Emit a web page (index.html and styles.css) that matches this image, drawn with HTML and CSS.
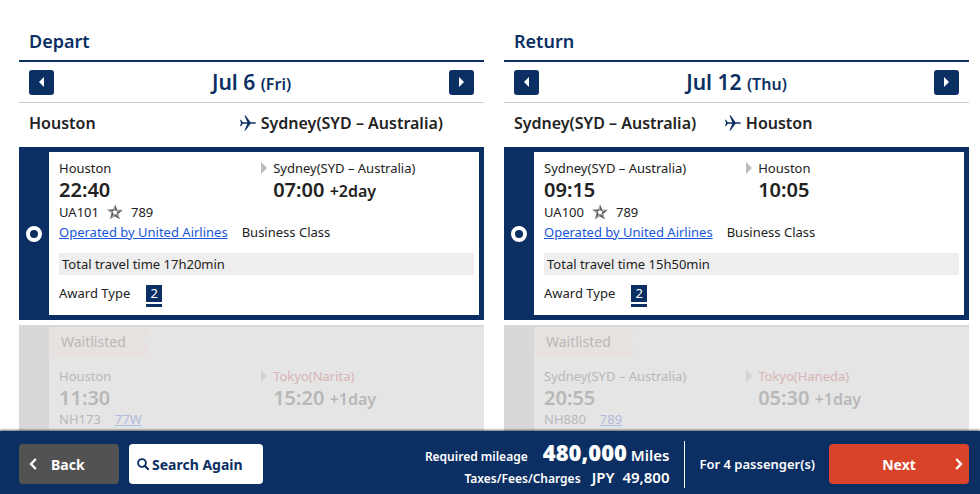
FILE: index.html
```html
<!DOCTYPE html>
<html lang="en">
<head>
    <meta charset="UTF-8">
    <meta name="viewport" content="width=device-width, initial-scale=1.0">
    <title>Select Flights</title>
    <link rel="stylesheet" href="styles.css">
</head>
<body>

<!-- Shared icons -->
<svg class="icon-defs" aria-hidden="true">
    <symbol id="icon-plane" viewBox="0 0 16 16">
        <path d="M0 4.8h.9L2.8 7.3h4.6L4.4.4h1.2l4.9 6.9h3.7c1.1 0 1.8.3 1.8.7s-.7.7-1.8.7h-3.7l-4.9 6.9H4.4l3-6.9H2.8L.9 11.2H0L1 8z"/>
    </symbol>
    <symbol id="icon-alliance" viewBox="0 0 16 16">
        <path fill="#a8a8a8" fill-rule="evenodd" d="M8 .5l2.1 4.9 5.7.4-4.3 3.7 1.4 5.7L8 12.4l-4.9 2.8 1.4-5.7L.2 5.8l5.7-.4zM8 6L5.7 7.6l.9 2.8h2.8l.9-2.8z"/>
        <path fill="#606060" d="M8 .5l2.1 4.9-.3 1.8L8 6zM15.8 5.8l-4.3 3.7-1.9.6.7-2.5zM12.9 15.2L8 12.4l-1-2h2.4zM3.1 15.2l1.4-5.7 1.2-1.9.9 2.8zM.2 5.8l5.7-.4L8 6 5.7 7.6z"/>
    </symbol>
    <symbol id="icon-search" viewBox="0 0 12 12">
        <circle cx="5" cy="5" r="3.9" fill="none" stroke="currentColor" stroke-width="1.9"/>
        <path d="M7.8 7.8l3.2 3.2" fill="none" stroke="currentColor" stroke-width="2.2" stroke-linecap="round"/>
    </symbol>
    <symbol id="icon-left" viewBox="0 0 8 12">
        <path d="M6.8 1L2 6l4.8 5" fill="none" stroke="currentColor" stroke-width="2.4"/>
    </symbol>
    <symbol id="icon-right" viewBox="0 0 8 12">
        <path d="M1.2 1L6 6l-4.8 5" fill="none" stroke="currentColor" stroke-width="2.4"/>
    </symbol>
</svg>

<main class="flights">
    <section class="bound">
        <h2>Depart</h2>
        <div class="date-nav">
            <button type="button" class="day-btn" aria-label="Previous day"><span class="tri tri-left"></span></button>
            <p class="date">Jul 6 <small>(Fri)</small></p>
            <button type="button" class="day-btn" aria-label="Next day"><span class="tri tri-right"></span></button>
        </div>
        <div class="route">
            <span>Houston</span>
            <span class="route-to"><svg class="plane"><use href="#icon-plane"/></svg>Sydney(SYD – Australia)</span>
        </div>

        <div class="flight selected">
            <div class="pick"><input type="radio" name="depart" id="ua101" aria-label="UA101" checked></div>
            <div class="details">
                <div class="legs">
                    <div class="leg">
                        <label for="ua101" class="city">Houston</label>
                        <p class="time">22:40</p>
                    </div>
                    <div class="leg arrival">
                        <p class="city">Sydney(SYD – Australia)</p>
                        <p class="time">07:00 <small>+2day</small></p>
                    </div>
                </div>
                <p class="info"><span>UA101</span><svg class="alliance"><use href="#icon-alliance"/></svg><span>789</span></p>
                <p class="info operator"><a href="#">Operated by United Airlines</a><span>Business Class</span></p>
                <p class="total">Total travel time 17h20min</p>
                <p class="award">Award Type <span class="award-num">2</span></p>
            </div>
        </div>

        <div class="flight disabled">
            <div class="pick"></div>
            <div class="details">
                <p class="tag">Waitlisted</p>
                <div class="legs">
                    <div class="leg">
                        <p class="city">Houston</p>
                        <p class="time">11:30</p>
                    </div>
                    <div class="leg arrival">
                        <p class="city other">Tokyo(Narita)</p>
                        <p class="time">15:20 <small>+1day</small></p>
                    </div>
                </div>
                <p class="info operator"><span>NH173</span><a href="#">77W</a></p>
            </div>
        </div>
    </section>

    <section class="bound">
        <h2>Return</h2>
        <div class="date-nav">
            <button type="button" class="day-btn" aria-label="Previous day"><span class="tri tri-left"></span></button>
            <p class="date">Jul 12 <small>(Thu)</small></p>
            <button type="button" class="day-btn" aria-label="Next day"><span class="tri tri-right"></span></button>
        </div>
        <div class="route">
            <span>Sydney(SYD – Australia)</span>
            <span class="route-to"><svg class="plane"><use href="#icon-plane"/></svg>Houston</span>
        </div>

        <div class="flight selected">
            <div class="pick"><input type="radio" name="return" id="ua100" aria-label="UA100" checked></div>
            <div class="details">
                <div class="legs">
                    <div class="leg">
                        <label for="ua100" class="city">Sydney(SYD – Australia)</label>
                        <p class="time">09:15</p>
                    </div>
                    <div class="leg arrival">
                        <p class="city">Houston</p>
                        <p class="time">10:05</p>
                    </div>
                </div>
                <p class="info"><span>UA100</span><svg class="alliance"><use href="#icon-alliance"/></svg><span>789</span></p>
                <p class="info operator"><a href="#">Operated by United Airlines</a><span>Business Class</span></p>
                <p class="total">Total travel time 15h50min</p>
                <p class="award">Award Type <span class="award-num">2</span></p>
            </div>
        </div>

        <div class="flight disabled">
            <div class="pick"></div>
            <div class="details">
                <p class="tag">Waitlisted</p>
                <div class="legs">
                    <div class="leg">
                        <p class="city">Sydney(SYD – Australia)</p>
                        <p class="time">20:55</p>
                    </div>
                    <div class="leg arrival">
                        <p class="city other">Tokyo(Haneda)</p>
                        <p class="time">05:30 <small>+1day</small></p>
                    </div>
                </div>
                <p class="info operator"><span>NH880</span><a href="#">789</a></p>
            </div>
        </div>
    </section>
</main>

<footer class="bar">
    <button type="button" class="btn back"><svg class="chevron"><use href="#icon-left"/></svg>Back</button>
    <button type="button" class="btn search"><svg class="glass"><use href="#icon-search"/></svg>Search Again</button>
    <div class="cost">
        <p class="miles">Required mileage <span><strong>480,000</strong> Miles</span></p>
        <p class="taxes">Taxes/Fees/Charges <span>JPY&nbsp; 49,800</span></p>
    </div>
    <p class="passengers">For 4 passenger(s)</p>
    <button type="button" class="btn next"><span>Next</span><svg class="chevron"><use href="#icon-right"/></svg></button>
</footer>

</body>
</html>
```
FILE: styles.css
```css
* {
    box-sizing: border-box;
    margin: 0;
    padding: 0;
}
body {
    display: flex;
    flex-direction: column;
    height: 100vh;
    font-family: "Noto Sans", "Open Sans", sans-serif;
    font-size: 13px;
    line-height: 20px;
    color: #222;
    background-color: #fff;
}
button {
    font-family: inherit;
    border: none;
    cursor: pointer;
}
small {
    font-size: 16px;
    line-height: 1;
}
.icon-defs {
    position: absolute;
    width: 0;
    height: 0;
}

/* Flight lists */
.flights {
    flex: 1;
    min-height: 0;
    display: grid;
    grid-template-columns: 1fr 1fr;
    gap: 20px;
    padding: 22px 11px 0 19px;
    overflow-y: auto;
    scrollbar-width: none;
}
h2 {
    padding: 0 10px;
    height: 40px;
    font-size: 18px;
    font-weight: 600;
    line-height: 38px;
    color: #0b2f63;
    border-bottom: 2px solid #0b2f63;
}
.date-nav {
    display: flex;
    justify-content: space-between;
    align-items: center;
    height: 41px;
    padding: 0 10px;
    border-bottom: 1px solid #ccc;
}
.day-btn {
    display: flex;
    justify-content: center;
    align-items: center;
    width: 25px;
    height: 25px;
    background-color: #0b2f63;
    border-radius: 3px;
}
.tri {
    border: 5px solid transparent;
}
.tri-left {
    border-left: none;
    border-right-color: #fff;
}
.tri-right {
    border-right: none;
    border-left-color: #fff;
}
.date {
    font-size: 21px;
    font-weight: 600;
    color: #0b2f63;
}
.route {
    display: grid;
    grid-template-columns: 9fr 10fr;
    align-items: center;
    height: 44px;
    padding: 0 10px 5px;
    font-size: 16px;
    font-weight: 600;
}
.route-to {
    display: flex;
    align-items: center;
    gap: 5px;
}
.plane {
    width: 16px;
    height: 16px;
    fill: #0b2f63;
}

/* Flight card */
.flight {
    display: flex;
    margin-bottom: 5px;
}
.selected {
    background-color: #0b2f63;
    padding: 5px 5px 5px 0;
}
.pick {
    display: flex;
    justify-content: center;
    align-items: center;
    width: 30px;
}
.pick input {
    appearance: none;
    width: 16px;
    height: 16px;
    border: 4px solid #fff;
    border-radius: 50%;
    background-color: #0b2f63;
}
.details {
    flex: 1;
    padding: 6px 5px 8px 10px;
    background-color: #fff;
}
.legs {
    display: grid;
    grid-template-columns: 19fr 20fr;
}
.city {
    display: block;
}
.arrival {
    position: relative;
    padding-left: 12px;
}
.arrival::before {
    content: "";
    position: absolute;
    left: 0;
    top: 4px;
    border: 6px solid transparent;
    border-left-color: #bbb;
    border-right: none;
}
.time {
    font-size: 20px;
    font-weight: 600;
    line-height: 23px;
}
.info {
    display: flex;
    align-items: center;
    gap: 8px;
    padding-top: 1px;
    line-height: 20px;
}
.operator {
    gap: 14px;
    padding-top: 0;
}
.info a {
    color: #1a56db;
}
.alliance {
    width: 16px;
    height: 16px;
}
.total {
    margin-top: 11px;
    padding: 0 3px;
    line-height: 22px;
    background-color: #eee;
}
.award {
    display: flex;
    align-items: flex-start;
    gap: 16px;
    margin-top: 10px;
    line-height: 17px;
}
.award-num {
    width: 16px;
    height: 22px;
    text-align: center;
    color: #fff;
    background: linear-gradient(#0b2f63 17px, #fff 17px, #fff 19px, #0b2f63 19px);
}

/* Unavailable flight */
.disabled {
    color: #b8b8b8;
    background-color: #d8d8d8;
    padding-top: 2px;
}
.disabled .details {
    padding: 0 10px 8px;
    background-color: #e5e5e5;
}
.disabled .arrival::before {
    border-left-color: #d4d4d4;
}
.disabled .other {
    color: #d8b4b4;
}
.disabled a {
    color: #b0bbdd;
}
.tag {
    width: 102px;
    margin: 0 0 9px -10px;
    padding-left: 12px;
    font-size: 14px;
    line-height: 30px;
    background-color: #e7e2df;
    clip-path: polygon(0 0, 100% 0, 94% 50%, 100% 100%, 0 100%);
}

/* Bottom bar */
.bar {
    position: relative;
    display: flex;
    align-items: center;
    height: 63px;
    padding: 3px 11px 0 19px;
    font-weight: 600;
    color: #fff;
    background-color: #0b2f63;
    box-shadow: 0 -1px 2px rgba(0, 0, 0, 0.6);
}
.btn {
    display: flex;
    align-items: center;
    height: 40px;
    font-size: 14px;
    font-weight: 700;
    border-radius: 4px;
}
.chevron {
    width: 8px;
    height: 12px;
}
.back {
    gap: 14px;
    width: 100px;
    padding: 0 10px;
    margin-right: 10px;
    color: #fff;
    background-color: #525252;
}
.search {
    gap: 3px;
    width: 134px;
    padding: 0 8px;
    color: #0b2f63;
    background-color: #fff;
}
.glass {
    width: 12px;
    height: 12px;
}
.cost {
    flex: 1;
    padding-right: 15px;
    font-size: 12px;
    text-align: right;
    border-right: 1px solid #fff;
}
.miles {
    line-height: 22px;
}
.miles span {
    margin-left: 12px;
    font-size: 15px;
}
.miles strong {
    font-size: 22px;
}
.taxes {
    line-height: 19px;
}
.taxes span {
    margin-left: 8px;
    font-size: 15px;
}
.passengers {
    padding: 0 14px;
}
.next {
    width: 140px;
    padding: 0 6px 0 14px;
    color: #fff;
    background-color: #d8432a;
}
.next span {
    flex: 1;
    text-align: center;
}
```
